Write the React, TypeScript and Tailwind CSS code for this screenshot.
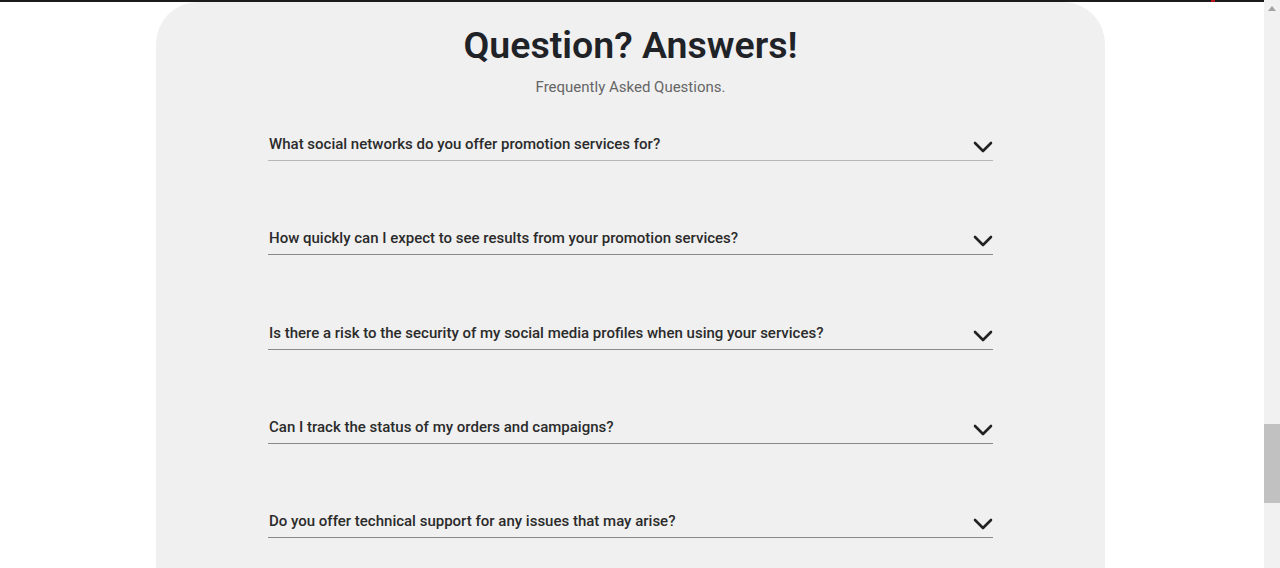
import { ReactNode } from "react";

const questions = [
  "What social networks do you offer promotion services for?",
  "How quickly can I expect to see results from your promotion services?",
  "Is there a risk to the security of my social media profiles when using your services?",
  "Can I track the status of my orders and campaigns?",
  "Do you offer technical support for any issues that may arise?",
];

function Chevron() {
  return (
    <svg width="20" height="12" viewBox="0 0 20 12" className="mt-[11px] shrink-0">
      <polyline
        points="2,2 10,10 18,2"
        fill="none"
        stroke="#222"
        strokeWidth="2.6"
        strokeLinecap="round"
        strokeLinejoin="round"
      />
    </svg>
  );
}

function FaqRow({ children, light }: { children: ReactNode; light?: boolean }) {
  return (
    <div
      className={`flex items-start justify-between pb-[4px] border-b ${
        light ? "border-[#b8b8b8]" : "border-[#8a8a8a]"
      }`}
    >
      <p className="pt-[2px] pl-px text-[15px] leading-6 font-medium text-[#2b2b2b]">{children}</p>
      <Chevron />
    </div>
  );
}

export default function App() {
  return (
    <div className="flex h-[568px] w-[1280px] overflow-hidden bg-white font-['Roboto',sans-serif]">
      <div className="flex flex-1 flex-col">
        <div className="flex h-[2px] shrink-0 bg-[#1c1a1a]">
          <div className="ml-[1211px] h-[2px] w-[4px] bg-[#b3131b]" />
        </div>
        <div className="ml-[156px] mr-[159px] flex-1 rounded-t-[42px] bg-[#f0f0f0] px-[112px] pt-[21px]">
          <h2 className="text-center text-[37.5px] leading-[44px] font-semibold text-[#1f2328]">
            Question? Answers!
          </h2>
          <p className="mt-[10px] text-center text-[15px] leading-5 text-[#666]">
            Frequently Asked Questions.
          </p>
          <div className="mt-[33px] flex flex-col gap-[63.3px]">
            {questions.map((q, i) => (
              <FaqRow key={q} light={i === 0}>
                {q}
              </FaqRow>
            ))}
          </div>
        </div>
      </div>
      <div className="flex w-[16px] shrink-0 flex-col bg-[#f1f1f1]">
        <div className="flex h-[16px] items-center justify-center">
          <svg width="8" height="5" viewBox="0 0 8 5">
            <polygon points="0,5 4,0 8,5" fill="#a3a3a3" />
          </svg>
        </div>
        <div className="mt-[408px] h-[79px] bg-[#c1c1c1]" />
      </div>
    </div>
  );
}
